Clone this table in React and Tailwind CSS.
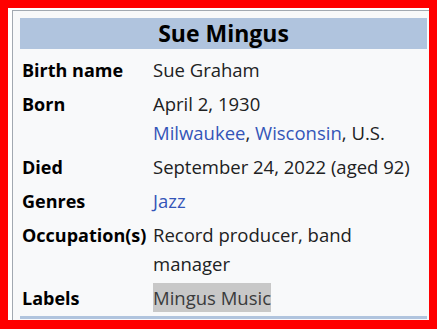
export default function App() {
  const rows = [
    { label: "Birth name", value: <span>Sue Graham</span> },
    {
      label: "Born",
      value: (
        <span>
          April 2, 1930
          <br />
          <span className="text-[#3455b8]">Milwaukee</span>,{" "}
          <span className="text-[#3455b8]">Wisconsin</span>, U.S.
        </span>
      ),
    },
    { label: "Died", value: <span>September 24, 2022 (aged 92)</span> },
    { label: "Genres", value: <span className="text-[#3455b8]">Jazz</span> },
    {
      label: "Occupation(s)",
      value: (
        <span>
          Record producer, band
          <br />
          manager
        </span>
      ),
    },
    {
      label: "Labels",
      value: (
        <span className="inline-block align-top bg-[#c8c8c8] text-[#3a3b3c]">Mingus Music</span>
      ),
    },
  ];
  return (
    <div
      className="w-[437px] h-[329px] bg-[#ff0000] pt-2 pl-2 overflow-hidden"
      style={{ fontFamily: '"Open Sans", "Noto Sans", sans-serif' }}
    >
      <div className="w-[421px] h-[312px] bg-white overflow-hidden pl-1 pt-[2px]">
        <div className="w-[440px] h-[330px] border-l border-t border-[#a2a9b1] bg-[#f8f9fa] pl-[7px] pt-[7px] text-[#202122]">
          <div className="w-[407px] h-[31px] bg-[#b0c4de] text-center font-bold text-[23px] leading-[31px] text-black">
            Sue Mingus
          </div>
          <div className="mt-[6px] flex flex-col gap-[5px] leading-[29px]">
            {rows.map((r) => (
              <div key={r.label} className="flex">
                <div className="w-[133px] pl-[2px] pt-[1px] -mb-[1px] font-bold text-black text-[18px] leading-[28px]">{r.label}</div>
                <div className="flex-1 text-[18.5px]">{r.value}</div>
              </div>
            ))}
          </div>
          <div className="mt-[4px] w-[407px] h-[3px] bg-[#b0c4de]" />
        </div>
      </div>
    </div>
  );
}
